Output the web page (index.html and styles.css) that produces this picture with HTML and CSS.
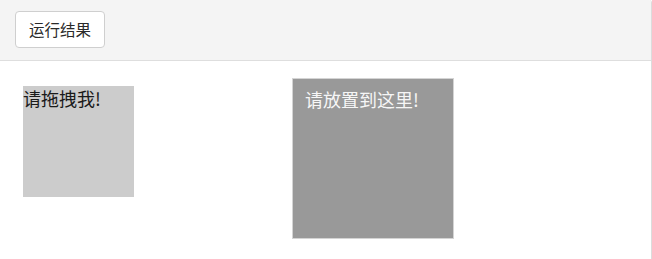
FILE: index.html
```html
<!DOCTYPE html>
<html lang="zh">
<head>
<meta charset="utf-8">
<link rel="stylesheet" href="styles.css">
</head>
<body>
<div class="frame">
  <div class="toolbar">
    <button class="run-btn">运行结果</button>
  </div>
  <div class="stage">
    <div class="drag-box">请拖拽我!</div>
    <div class="drop-box">请放置到这里!</div>
  </div>
</div>
</body>
</html>
```
FILE: styles.css
```css
html, body {
  margin: 0;
  padding: 0;
  background: #ffffff;
}
body {
  font-family: "Noto Sans CJK SC", "Noto Sans", sans-serif;
}
.frame {
  width: 651px;
  height: 259px;
  border-right: 1px solid #dcdcdc;
  border-top-right-radius: 3px;
  overflow: hidden;
}
.toolbar {
  height: 61px;
  background: #f4f4f4;
  border-bottom: 1px solid #dedede;
  display: flex;
  align-items: flex-start;
  padding-left: 15px;
  box-sizing: border-box;
}
.run-btn {
  margin-top: 11px;
  width: 90px;
  height: 37px;
  padding: 0;
  background: #ffffff;
  border: 1px solid #cfcfcf;
  border-radius: 4px;
  font-family: "Noto Sans CJK SC", sans-serif;
  font-size: 15.5px;
  color: #2a2a2a;
  line-height: 35px;
}
.stage {
  display: flex;
  align-items: flex-start;
}
.drag-box {
  margin-left: 23px;
  margin-top: 25px;
  width: 111px;
  height: 111px;
  background: #cccccc;
  color: #1a1a1a;
  font-size: 18px;
  line-height: 20px;
  padding-top: 2px;
  box-sizing: border-box;
}
.drop-box {
  margin-left: 158px;
  margin-top: 17px;
  width: 162px;
  height: 161px;
  box-sizing: border-box;
  background: #999999;
  border: 1px solid #d4d4d4;
  color: #f6f6f6;
  font-size: 18px;
  line-height: 20px;
  padding: 10px 0 0 12px;
}
```
